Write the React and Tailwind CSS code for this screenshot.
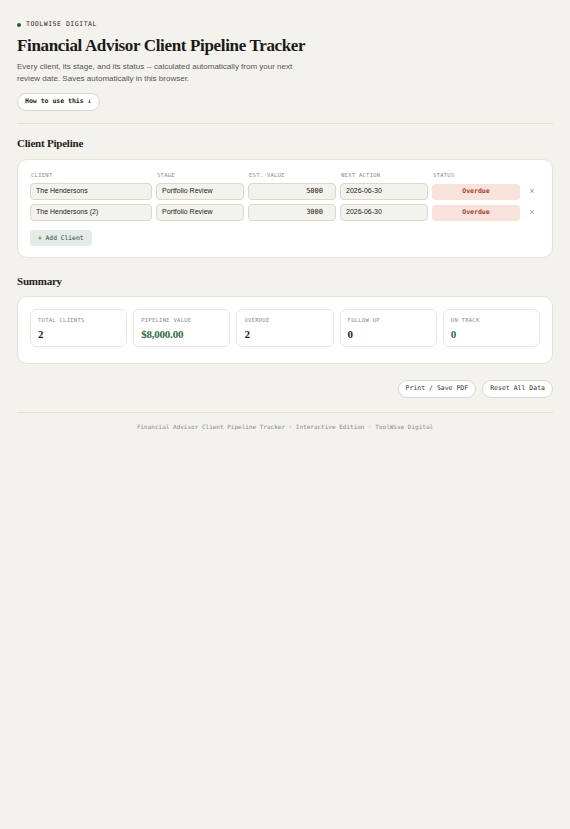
import React from "react";

const serif = { fontFamily: '"Liberation Serif", "Times New Roman", serif' };

export default function App() {
  const rows = [
    { client: "The Hendersons", stage: "Portfolio Review", value: "5000", date: "2026-06-30" },
    { client: "The Hendersons (2)", stage: "Portfolio Review", value: "3000", date: "2026-06-30" },
  ];
  const stats = [
    { label: "TOTAL CLIENTS", value: "2", green: false },
    { label: "PIPELINE VALUE", value: "$8,000.00", green: true },
    { label: "OVERDUE", value: "2", green: false },
    { label: "FOLLOW UP", value: "0", green: false },
    { label: "ON TRACK", value: "0", green: true },
  ];
  return (
    <div className="min-h-[829px] bg-[#f4f2ed] text-[#1e1e1e] font-['Liberation_Sans',Arial,sans-serif]">
      <div className="px-[17px] pt-[20px] pb-[20px]">
        <div className="flex items-center gap-[5px] h-[10px]">
          <span className="w-[4px] h-[4px] rounded-full bg-[#2d5a3d]"></span>
          <span className="font-['DejaVu_Sans_Mono',monospace] text-[6.5px] tracking-[0.08em] text-[#2a2a2a]">TOOLWISE DIGITAL</span>
        </div>
        <h1 className="mt-[4px] text-[17px] leading-[24px] font-bold tracking-[-0.02em] text-[#1a1a1a]" style={serif}>
          Financial Advisor Client Pipeline Tracker
        </h1>
        <p className="mt-[3px] text-[8px] leading-[12px] text-[#555] max-w-[300px]">
          Every client, its stage, and its status -- calculated automatically from your next review date. Saves automatically in this browser.
        </p>
        <button className="mt-[8px] h-[18px] px-[7px] rounded-full border border-[#ddd8cc] bg-white font-['DejaVu_Sans_Mono',monospace] text-[6.5px] font-bold text-[#1e1e1e]">
          How to use this ↓
        </button>
        <div className="mt-[12px] border-t border-[#e3dfd6]"></div>

        <h2 className="mt-[11px] text-[11px] leading-[16px] font-bold tracking-[-0.02em]" style={serif}>Client Pipeline</h2>
        <div className="mt-[8px] bg-white border-[1.5px] border-[#e6e2d9] rounded-[10px] px-[12px] pt-[11px] pb-[10px]">
          <div className="grid grid-cols-[122px_88px_88px_88px_88px_1fr] gap-x-[4px] gap-y-[4px] items-center">
            {["CLIENT", "STAGE", "EST. VALUE", "NEXT ACTION", "STATUS", ""].map((h, i) => (
              <div key={i} className="font-['DejaVu_Sans_Mono',monospace] text-[5.5px] tracking-[0.05em] text-[#8a8a8a] h-[8px] leading-[8px] pl-[1px]">{h}</div>
            ))}
            {rows.map((r, i) => (
              <React.Fragment key={i}>
                <div className="h-[17px] rounded-[4px] border border-[#ddd8cc] bg-[#f4f2ed] px-[5px] flex items-center text-[7px] text-[#222]">{r.client}</div>
                <div className="h-[17px] rounded-[4px] border border-[#ddd8cc] bg-[#f4f2ed] px-[5px] flex items-center text-[7px] text-[#222]">{r.stage}</div>
                <div className="h-[17px] rounded-[4px] border border-[#ddd8cc] bg-[#f4f2ed] px-[12px] flex items-center justify-end font-['DejaVu_Sans_Mono',monospace] text-[7px] text-[#222]">{r.value}</div>
                <div className="h-[17px] rounded-[4px] border border-[#ddd8cc] bg-[#f4f2ed] px-[5px] flex items-center text-[7px] text-[#222]">{r.date}</div>
                <div className="h-[16px] rounded-[3px] bg-[#f8e2dc] flex items-center justify-center font-['DejaVu_Sans_Mono',monospace] font-bold text-[6.5px] text-[#a8402f]">Overdue</div>
                <div className="flex items-center justify-center text-[9px] text-[#999]">×</div>
              </React.Fragment>
            ))}
          </div>
          <button className="mt-[9px] h-[16px] px-[8px] rounded-[4px] bg-[#e4ece6] font-['DejaVu_Sans_Mono',monospace] text-[6.3px] text-[#2e3a33]">
            + Add Client
          </button>
        </div>

        <h2 className="mt-[15px] text-[11px] leading-[16px] font-bold tracking-[-0.02em]" style={serif}>Summary</h2>
        <div className="mt-[7px] bg-white border-[1.5px] border-[#e6e2d9] rounded-[10px] px-[12px] pt-[12px] pb-[16px]">
          <div className="grid grid-cols-5 gap-[6px]">
            {stats.map((s, i) => (
              <div key={i} className="h-[38px] rounded-[6px] border border-[#ebe8e1] px-[7px] pt-[6px]">
                <div className="font-['DejaVu_Sans_Mono',monospace] text-[5.5px] tracking-[0.05em] text-[#8a8a8a] leading-[8px]">{s.label}</div>
                <div className={`mt-[3px] text-[11px] leading-[14px] font-bold tracking-[-0.02em] ${s.green ? "text-[#2f6b45]" : "text-[#1e1e1e]"}`} style={serif}>{s.value}</div>
              </div>
            ))}
          </div>
        </div>

        <div className="mt-[16px] flex justify-end gap-[6px]">
          <button className="h-[18px] px-[7px] rounded-full border border-[#ddd8cc] bg-white font-['DejaVu_Sans_Mono',monospace] text-[6.5px] text-[#333]">Print / Save PDF</button>
          <button className="h-[18px] px-[7px] rounded-full border border-[#ddd8cc] bg-white font-['DejaVu_Sans_Mono',monospace] text-[6.5px] text-[#333]">Reset All Data</button>
        </div>
        <div className="mt-[14px] border-t border-[#e3dfd6]"></div>
        <div className="mt-[10px] text-center font-['DejaVu_Sans_Mono',monospace] text-[6px] leading-[8px] text-[#8a8a8a]">
          Financial Advisor Client Pipeline Tracker · Interactive Edition · ToolWise Digital
        </div>
      </div>
    </div>
  );
}
